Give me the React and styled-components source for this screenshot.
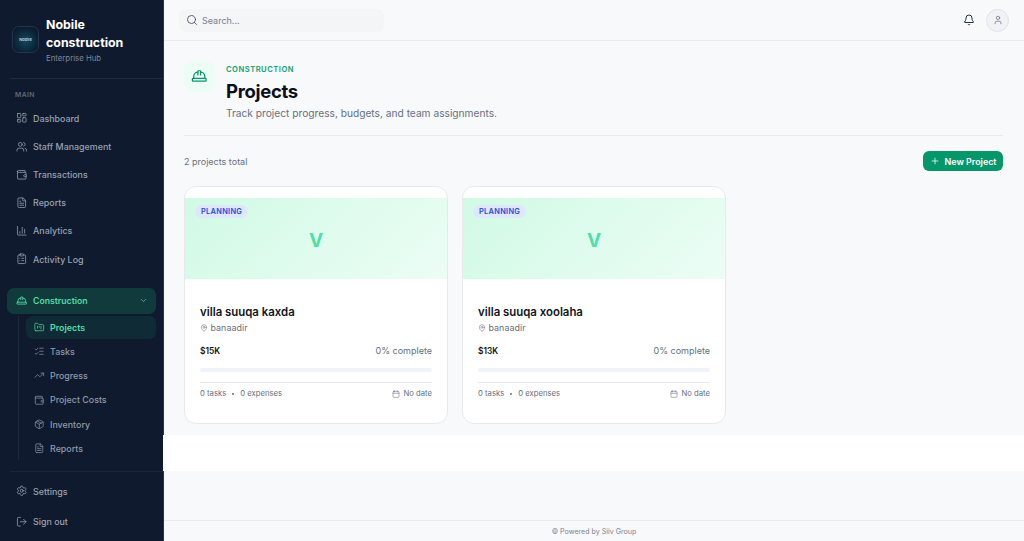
import styled, { createGlobalStyle } from "styled-components";
import {
  LayoutDashboard,
  Users,
  Wallet,
  FileText,
  BarChart3,
  ClipboardList,
  HardHat,
  ChevronDown,
  FolderKanban,
  ListChecks,
  TrendingUp,
  Package,
  Settings,
  LogOut,
  Search,
  Bell,
  User,
  Plus,
  MapPin,
  Calendar,
} from "lucide-react";

const GlobalStyle = createGlobalStyle`
  * { box-sizing: border-box; }
  html, body { margin: 0; height: 100%; }
  body { font-family: Inter, "Liberation Sans", sans-serif; background: #f8f9fb; overflow: hidden; }
  #root { height: 100%; }
`;

const Layout = styled.div`
  display: flex;
  width: 1024px;
  height: 541px;
`;

const Sidebar = styled.aside`
  width: 163px;
  flex-shrink: 0;
  background: #0f1a2e;
  display: flex;
  flex-direction: column;
`;

const Brand = styled.div`
  height: 79px;
  margin-left: 10px;
  padding-left: 2px;
  display: flex;
  align-items: center;
  gap: 7px;
  border-bottom: 1px solid #1e2a3e;
`;

const Logo = styled.div`
  width: 27px;
  height: 27px;
  flex-shrink: 0;
  border-radius: 7px;
  border: 1px solid #25344a;
  background: radial-gradient(circle at 50% 55%, #14475f 0%, #0a2233 65%, #081724 100%);
  color: #b9cad6;
  font-size: 4px;
  font-weight: 700;
  display: flex;
  align-items: center;
  justify-content: center;
`;

const BrandName = styled.div`
  color: #ffffff;
  font-size: 12.4px;
  line-height: 18px;
  font-weight: 700;
  padding-top: 1px;
`;

const BrandSub = styled.div`
  color: #7c8797;
  font-size: 7.8px;
  line-height: 12px;
`;

const SectionLabel = styled.div`
  color: #5d6a7d;
  font-size: 6.8px;
  font-weight: 600;
  letter-spacing: 0.4px;
  margin: 11px 0 7px 15px;
  line-height: 9px;
`;

const NavList = styled.nav`
  display: flex;
  flex-direction: column;
  gap: 4px;
  padding: 0 7px;
`;

const NavItem = styled.div`
  height: 24.2px;
  padding-left: 8.5px;
  display: flex;
  align-items: center;
  gap: 6px;
  color: #98a2b2;
  font-size: 8.9px;
  font-weight: 500;
  svg { flex-shrink: 0; }
`;

const GroupHead = styled(NavItem)`
  height: 26px;
  margin: 16.5px 7px 0 7px;
  border-radius: 7px;
  background: #113a3d;
  color: #4fdca6;
  font-weight: 600;
  font-size: 8.7px;
  padding-right: 8px;
`;

const GroupLabel = styled.span`
  flex: 1;
`;

const SubList = styled.div`
  margin: 2.5px 7px 0 18px;
  padding-left: 7px;
  border-left: 1px solid #1d2a3d;
  display: flex;
  flex-direction: column;
  height: 144px;
`;

const SubItem = styled.div`
  height: ${(p) => (p.$active ? "23px" : "24.3px")};
  flex-shrink: 0;
  padding-left: 8px;
  display: flex;
  align-items: center;
  gap: 5.5px;
  border-radius: 7px;
  font-size: 8.9px;
  font-weight: ${(p) => (p.$active ? 600 : 500)};
  color: ${(p) => (p.$active ? "#4fdca6" : "#8f99a9")};
  background: ${(p) => (p.$active ? "#0f2c36" : "transparent")};
`;

const SideFooter = styled.div`
  margin-top: auto;
  margin-left: 10px;
  border-top: 1px solid #1a2639;
  height: 70px;
  padding-top: 7px;
  display: flex;
  flex-direction: column;
  gap: 6px;
`;

const FootItem = styled(NavItem)`
  padding-left: 5.5px;
`;

const Main = styled.div`
  flex: 1;
  min-width: 0;
  display: flex;
  flex-direction: column;
  border-left: 1px solid #263348;
`;

const TopBar = styled.header`
  height: 41px;
  flex-shrink: 0;
  border-bottom: 1px solid #e8eaee;
  display: flex;
  align-items: center;
  justify-content: space-between;
  padding: 0 15px;
`;

const SearchBox = styled.div`
  width: 205px;
  height: 23px;
  border-radius: 7px;
  background: #f4f5f7;
  display: flex;
  align-items: center;
  gap: 4.5px;
  padding-left: 6.5px;
  color: #7a8290;
  font-size: 9px;
`;

const TopActions = styled.div`
  display: flex;
  align-items: center;
  gap: 11px;
`;

const Avatar = styled.div`
  width: 23px;
  height: 23px;
  border-radius: 50%;
  background: #f0f2f5;
  border: 1px solid #dfe3e8;
  display: flex;
  align-items: center;
  justify-content: center;
  color: #5b6472;
`;

const Content = styled.main`
  height: 394px;
  flex-shrink: 0;
  padding: 20px 21px 0 20px;
`;

const PageHead = styled.div`
  display: flex;
  gap: 11px;
  height: 75px;
  border-bottom: 1px solid #e8eaee;
`;

const HeadIcon = styled.div`
  width: 31px;
  height: 31px;
  border-radius: 9px;
  background: #ecfdf5;
  color: #059669;
  display: flex;
  align-items: center;
  justify-content: center;
`;

const Eyebrow = styled.div`
  color: #0d9f6e;
  font-size: 7.6px;
  line-height: 10px;
  margin-top: 4px;
  font-weight: 600;
  letter-spacing: 0.5px;
`;

const Title = styled.h1`
  margin: 3px 0 0;
  font-size: 18.5px;
  line-height: 26px;
  font-weight: 700;
  color: #0b0f19;
  letter-spacing: -0.3px;
`;

const Subtitle = styled.p`
  margin: 3px 0 0;
  font-size: 10.2px;
  line-height: 13px;
  color: #667080;
`;

const ListBar = styled.div`
  display: flex;
  align-items: center;
  justify-content: space-between;
  height: 20px;
  margin-top: 15px;
`;

const Count = styled.span`
  font-size: 9px;
  color: #667080;
`;

const AddButton = styled.button`
  width: 80px;
  height: 20px;
  border: none;
  border-radius: 6px;
  background: #059669;
  color: #ffffff;
  font: 600 8.9px Inter, sans-serif;
  display: flex;
  align-items: center;
  justify-content: center;
  gap: 5px;
  padding: 0;
`;

const CardGrid = styled.div`
  display: grid;
  grid-template-columns: repeat(3, 264px);
  gap: 14px;
  margin-top: 15px;
`;

const Card = styled.article`
  height: 238px;
  background: #ffffff;
  border: 1px solid #e7e9ed;
  border-radius: 12px;
  padding-top: 11px;
  overflow: hidden;
`;

const Banner = styled.div`
  position: relative;
  height: 81px;
  padding-top: 4px;
  background: linear-gradient(135deg, #d1fae5, #ecfdf5);
  display: flex;
  align-items: center;
  justify-content: center;
  color: #4fe0a8;
  font-size: 19px;
  font-weight: 700;
`;

const Badge = styled.span`
  position: absolute;
  top: 7px;
  left: 10px;
  height: 13px;
  padding: 0 6px;
  border-radius: 7px;
  background: #dfe7ff;
  color: #1d4ed8;
  font-size: 7.4px;
  font-weight: 600;
  letter-spacing: 0.3px;
  display: flex;
  align-items: center;
`;

const CardBody = styled.div`
  padding: 26px 15px 0;
`;

const CardTitle = styled.h3`
  margin: 0;
  font-size: 11.4px;
  line-height: 15px;
  font-weight: 600;
  color: #0f1420;
`;

const Location = styled.div`
  display: flex;
  align-items: center;
  gap: 2.5px;
  margin-top: 1px;
  font-size: 8.9px;
  line-height: 13px;
  letter-spacing: 0.05px;
  color: #667080;
`;

const StatRow = styled.div`
  display: flex;
  justify-content: space-between;
  align-items: center;
  margin-top: 11px;
  line-height: 12px;
`;

const Amount = styled.span`
  font-size: 8.4px;
  font-weight: 600;
  color: #0f1420;
`;

const Percent = styled.span`
  font-size: 9px;
  color: #667080;
`;

const Track = styled.div`
  height: 4px;
  border-radius: 2px;
  background: #f0f3f7;
  margin-top: 11px;
`;

const MetaRow = styled.div`
  display: flex;
  justify-content: space-between;
  align-items: center;
  margin-top: 10px;
  padding-top: 5px;
  border-top: 1px solid #e8eaee;
  font-size: 7.7px;
  line-height: 11px;
  color: #667080;
`;

const MetaLeft = styled.div`
  display: flex;
  align-items: center;
  gap: 5px;
`;

const Dot = styled.span`
  width: 2px;
  height: 2px;
  border-radius: 50%;
  background: #667080;
  margin: 0 1px;
`;

const DateText = styled.div`
  display: flex;
  align-items: center;
  gap: 3px;
`;

const WhiteBand = styled.div`
  height: 36px;
  flex-shrink: 0;
  margin-left: -1px;
  background: #ffffff;
`;

const Footer = styled.footer`
  margin-top: auto;
  height: 21px;
  border-top: 1px solid #e8eaee;
  display: flex;
  align-items: center;
  justify-content: center;
  font-size: 7.1px;
  color: #7a8290;
`;

const mainNav = [
  ["Dashboard", LayoutDashboard],
  ["Staff Management", Users],
  ["Transactions", Wallet],
  ["Reports", FileText],
  ["Analytics", BarChart3],
  ["Activity Log", ClipboardList],
];

const subNav = [
  ["Projects", FolderKanban],
  ["Tasks", ListChecks],
  ["Progress", TrendingUp],
  ["Project Costs", Wallet],
  ["Inventory", Package],
  ["Reports", FileText],
];

const projects = [
  { name: "villa suuqa kaxda", amount: "$15K" },
  { name: "villa suuqa xoolaha", amount: "$13K" },
];

const App = () => {
  return (
    <Layout>
      <GlobalStyle />
      <Sidebar>
        <Brand>
          <Logo>Nobile</Logo>
          <div>
            <BrandName>
              Nobile
              <br />
              construction
            </BrandName>
            <BrandSub>Enterprise Hub</BrandSub>
          </div>
        </Brand>
        <SectionLabel>MAIN</SectionLabel>
        <NavList>
          {mainNav.map(([label, Icon]) => (
            <NavItem key={label}>
              <Icon size={11.5} strokeWidth={1.6} />
              {label}
            </NavItem>
          ))}
        </NavList>
        <GroupHead>
          <HardHat size={11.5} strokeWidth={1.8} />
          <GroupLabel>Construction</GroupLabel>
          <ChevronDown size={9} strokeWidth={1.8} />
        </GroupHead>
        <SubList>
          {subNav.map(([label, Icon], i) => (
            <SubItem key={label} $active={i === 0}>
              <Icon size={10.5} strokeWidth={1.6} />
              {label}
            </SubItem>
          ))}
        </SubList>
        <SideFooter>
          <FootItem>
            <Settings size={11.5} strokeWidth={1.6} />
            Settings
          </FootItem>
          <FootItem>
            <LogOut size={11.5} strokeWidth={1.6} />
            Sign out
          </FootItem>
        </SideFooter>
      </Sidebar>
      <Main>
        <TopBar>
          <SearchBox>
            <Search size={12} strokeWidth={1.7} color="#444b57" />
            Search...
          </SearchBox>
          <TopActions>
            <Bell size={12} strokeWidth={1.8} color="#111827" />
            <Avatar>
              <User size={10} strokeWidth={1.6} />
            </Avatar>
          </TopActions>
        </TopBar>
        <Content>
          <PageHead>
            <HeadIcon>
              <HardHat size={16.5} strokeWidth={1.8} />
            </HeadIcon>
            <div>
              <Eyebrow>CONSTRUCTION</Eyebrow>
              <Title>Projects</Title>
              <Subtitle>Track project progress, budgets, and team assignments.</Subtitle>
            </div>
          </PageHead>
          <ListBar>
            <Count>2 projects total</Count>
            <AddButton>
              <Plus size={10} strokeWidth={1.8} />
              New Project
            </AddButton>
          </ListBar>
          <CardGrid>
            {projects.map((project) => (
              <Card key={project.name}>
                <Banner>
                  <Badge>PLANNING</Badge>V
                </Banner>
                <CardBody>
                  <CardTitle>{project.name}</CardTitle>
                  <Location>
                    <MapPin size={8} strokeWidth={1.6} />
                    banaadir
                  </Location>
                  <StatRow>
                    <Amount>{project.amount}</Amount>
                    <Percent>0% complete</Percent>
                  </StatRow>
                  <Track />
                  <MetaRow>
                    <MetaLeft>
                      0 tasks <Dot /> 0 expenses
                    </MetaLeft>
                    <DateText>
                      <Calendar size={8} strokeWidth={1.6} />
                      No date
                    </DateText>
                  </MetaRow>
                </CardBody>
              </Card>
            ))}
          </CardGrid>
        </Content>
        <WhiteBand />
        <Footer>© Powered by Siiv Group</Footer>
      </Main>
    </Layout>
  );
};

export default App;
